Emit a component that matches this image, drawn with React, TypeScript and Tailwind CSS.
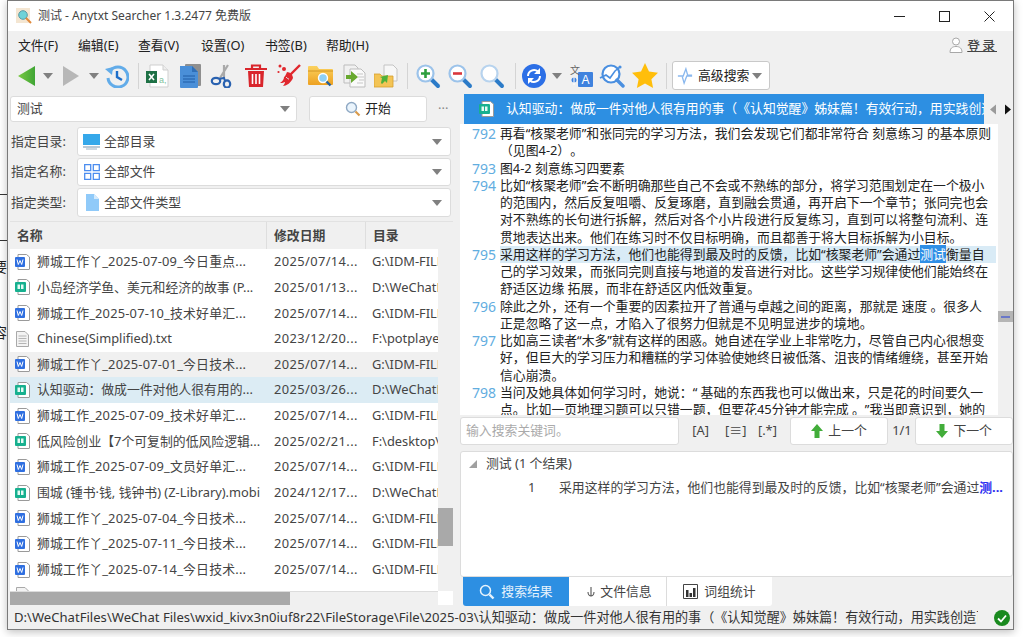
import type { ReactNode } from 'react'

const Caret = ({ className = '' }: { className?: string }) => (
  <svg viewBox="0 0 10 6" className={`h-[6px] w-[10px] shrink-0 ${className}`}>
    <path d="M0 0h10L5 6z" fill="#808080" />
  </svg>
)

function Lens({ mark, ring = '#9cc3ea' }: { mark?: ReactNode; ring?: string }) {
  return (
    <svg viewBox="0 0 26 26" className="h-[26px] w-[26px]">
      <path d="M16 16l7 7" stroke="#2b7bc8" strokeWidth="4" strokeLinecap="round" />
      <circle cx="10.5" cy="10.5" r="8" fill="#fff" stroke={ring} strokeWidth="2.2" />
      {mark}
    </svg>
  )
}

const BackIcon = () => (
  <svg viewBox="0 0 18 20" className="h-[20px] w-[18px]">
    <defs>
      <linearGradient id="bk" x1="0" x2="1">
        <stop offset="0" stopColor="#7ac943" />
        <stop offset="1" stopColor="#3fa535" />
      </linearGradient>
    </defs>
    <path d="M0 10L17 0v20z" fill="url(#bk)" />
  </svg>
)

const ForwardIcon = () => (
  <svg viewBox="0 0 16 20" className="h-[20px] w-[16px]">
    <path d="M16 10L0 0v20z" fill="#b7b7b7" />
  </svg>
)

const HistoryIcon = () => (
  <svg viewBox="0 0 24 24" className="h-[24px] w-[24px]">
    <path d="M5 7a10 10 0 1 1-2 7" fill="none" stroke="#62ace9" strokeWidth="3" />
    <path d="M0 5l8-2-1 8z" fill="#62ace9" />
    <path d="M12 7v6l5 3" fill="none" stroke="#1f6fc9" strokeWidth="2.4" />
  </svg>
)

const ExcelIcon = () => (
  <svg viewBox="0 0 24 24" className="h-[24px] w-[24px]">
    <path d="M5 1h13l5 5v17H5z" fill="#fff" stroke="#cfcfcf" />
    <path d="M18 1v5h5" fill="#eee" stroke="#cfcfcf" />
    <rect x="1" y="7" width="11" height="12" fill="#1e7145" />
    <path d="M4 10l5 6M9 10l-5 6" stroke="#fff" strokeWidth="1.6" />
    <text x="14" y="19" fontSize="9" fill="#7fc29b" fontFamily="Liberation Sans, sans-serif">a,</text>
  </svg>
)

const DocIcon = () => (
  <svg viewBox="0 0 22 24" className="h-[24px] w-[22px]">
    <rect x="6" y="0" width="16" height="22" rx="1" fill="#8f8f8f" />
    <path d="M1 2h12l6 6v15a1 1 0 0 1-1 1H2a1 1 0 0 1-1-1z" fill="#4a8fd8" />
    <path d="M13 2v6h6z" fill="#2f6fb8" />
    <path d="M4 12h12M4 15h12M4 18h12" stroke="#1f5da6" strokeWidth="1" />
  </svg>
)

const ScissorsIcon = () => (
  <svg viewBox="0 0 24 24" className="h-[24px] w-[24px]">
    <path d="M10 14L18 1M14 14L14 1" stroke="#a9a9a9" strokeWidth="2.2" />
    <ellipse cx="6" cy="17" rx="4.2" ry="3.2" fill="none" stroke="#2a62b0" strokeWidth="2.2" />
    <ellipse cx="17" cy="20" rx="3.2" ry="3.6" fill="none" stroke="#2a62b0" strokeWidth="2.2" />
    <path d="M9 15l5-1 1 3" fill="none" stroke="#2a62b0" strokeWidth="2" />
  </svg>
)

const TrashIcon = () => (
  <svg viewBox="0 0 22 24" className="h-[24px] w-[22px]">
    <path d="M7 4V1.5h8V4M0 5h22" fill="none" stroke="#d9262c" strokeWidth="2.2" />
    <path d="M3 7h16l-1 16H4z" fill="#d9262c" />
    <path d="M7.5 10v10M11 10v10M14.5 10v10" stroke="#fff" strokeWidth="1.6" />
  </svg>
)

const BroomIcon = () => (
  <svg viewBox="0 0 24 24" className="h-[24px] w-[24px]">
    <path d="M23 1L13 11" stroke="#e0282e" strokeWidth="2.4" />
    <path d="M10 8c3 0 6 3 6 6-2 5-7 8-10 8 1-1 2-3 2-4-2 1-4 1-5 1 3-2 4-4 4-6 1 0 2-3 3-5z" fill="#e0282e" />
    <path d="M9 13c1 1 2 2 3 2" stroke="#fff" strokeWidth="1" />
    <circle cx="3" cy="2" r="1.5" fill="#e0282e" />
    <circle cx="7" cy="5" r="2" fill="#e0282e" />
    <circle cx="1.5" cy="8" r="1.1" fill="#e0282e" />
  </svg>
)

const FolderSearchIcon = () => (
  <svg viewBox="0 0 26 24" className="h-[24px] w-[26px]">
    <defs>
      <linearGradient id="fo" x1="0" x2="0" y1="0" y2="1">
        <stop offset="0" stopColor="#fbd25f" />
        <stop offset="1" stopColor="#eda122" />
      </linearGradient>
    </defs>
    <path d="M0 3a1 1 0 0 1 1-1h8l2 3h13a1 1 0 0 1 1 1v14a1 1 0 0 1-1 1H1a1 1 0 0 1-1-1z" fill="url(#fo)" />
    <path d="M0 7h25" stroke="#c98a1b" strokeWidth="0.8" />
    <circle cx="15" cy="14" r="4.5" fill="#8fd0f5" stroke="#fff" strokeWidth="1.4" />
    <path d="M18.5 17.5l4 4" stroke="#225f9f" strokeWidth="2.4" />
  </svg>
)

const CopyIcon = () => (
  <svg viewBox="0 0 24 24" className="h-[24px] w-[24px]">
    <path d="M2 1h11l3 3v15H2z" fill="#f1f1f1" stroke="#bdbdbd" />
    <path d="M8 5h11l4 4v14H8z" fill="#fafafa" stroke="#bdbdbd" />
    <path d="M15 10h6M15 19h6M16 13h6M17 16h5" stroke="#c7c7c7" />
    <path d="M4 11h5V7l7 6-7 6v-4H4z" fill="#68a92f" />
  </svg>
)

const FolderArrowIcon = () => (
  <svg viewBox="0 0 24 24" className="h-[24px] w-[24px]">
    <path d="M10 1h9l4 4v12H10z" fill="#f7f7f7" stroke="#c4c4c4" />
    <path d="M0 10h6l2 2h11v11H0z" fill="#f3c455" stroke="#d59e2c" strokeWidth="0.8" />
    <path d="M7 19l1-5-2-1 8-2-1 8-2-2-3 3z" fill="#4fb13b" />
  </svg>
)

const SyncIcon = () => (
  <svg viewBox="0 0 24 24" className="h-[24px] w-[24px]">
    <circle cx="12" cy="12" r="12" fill="#2c6fe6" />
    <path d="M6 12a6 6 0 0 1 10-4.4" fill="none" stroke="#fff" strokeWidth="2" />
    <path d="M18 12a6 6 0 0 1-10 4.4" fill="none" stroke="#fff" strokeWidth="2" />
    <path d="M18 4v6h-6zM6 20v-6h6z" fill="#fff" />
  </svg>
)

const TranslateIcon = () => (
  <svg viewBox="0 0 24 24" className="h-[24px] w-[24px]">
    <rect x="9" y="8" width="15" height="15" rx="1" fill="#3f82de" />
    <text x="16.5" y="20" textAnchor="middle" fontSize="12" fill="#fff" fontFamily="Liberation Sans, sans-serif">A</text>
    <text x="1" y="10" fontSize="10" fill="#666" fontFamily="Noto Sans CJK SC, sans-serif">文</text>
    <circle cx="5" cy="16" r="2.5" fill="#3f82de" />
    <path d="M5 13v8" stroke="#fff" strokeWidth="1" />
  </svg>
)

const ChartLensIcon = () => (
  <svg viewBox="0 0 26 26" className="h-[26px] w-[26px]">
    <circle cx="12" cy="11" r="8.5" fill="#fff" stroke="#4a8fe0" strokeWidth="2.2" />
    <path d="M18 17l6 6" stroke="#4a8fe0" strokeWidth="3.4" strokeLinecap="round" />
    <path d="M1 15l6-3 4 3 5-7 5-4" fill="none" stroke="#4a8fe0" strokeWidth="1.6" />
    <circle cx="21" cy="4" r="1.6" fill="#4a8fe0" />
  </svg>
)

const StarIcon = () => (
  <svg viewBox="0 0 26 25" className="h-[25px] w-[26px]">
    <path d="M13 0l4 8.6 9 1.2-6.6 6.4 1.7 8.8L13 20.6 4.9 25l1.7-8.8L0 9.8l9-1.2z" fill="#ffbe0b" />
  </svg>
)

const AdvIcon = () => (
  <svg viewBox="0 0 18 20" className="h-[18px] w-[16px]">
    <path d="M1 10h6l3-8 2 7h5M17 10h-6l-3 8-2-7" fill="none" stroke="#8ab8ee" strokeWidth="1.5" />
  </svg>
)

const SmallLens = () => (
  <svg viewBox="0 0 16 16" className="h-[16px] w-[16px]">
    <circle cx="6.5" cy="6.5" r="5" fill="#eaf4fc" stroke="#8fa9c4" strokeWidth="1.4" />
    <path d="M10.5 10.5l4 4" stroke="#d99a4a" strokeWidth="2.2" />
  </svg>
)

const MonitorIcon = () => (
  <svg viewBox="0 0 18 16" className="h-[16px] w-[18px]">
    <rect x="0" y="0" width="17" height="11" fill="#35a8ea" />
    <path d="M0 12h17v2H0z" fill="#b9c9d6" />
    <path d="M3 15h11" stroke="#9db2c2" />
  </svg>
)

const GridIcon = () => (
  <svg viewBox="0 0 16 16" className="h-[16px] w-[16px]">
    <path d="M.7.7h6v6h-6zM9.3.7h6v6h-6zM.7 9.3h6v6h-6zM9.3 9.3h6v6h-6z" fill="none" stroke="#4b8df0" strokeWidth="1.3" />
  </svg>
)

const PageIcon = () => (
  <svg viewBox="0 0 13 17" className="h-[17px] w-[13px]">
    <path d="M0 0h8l5 5v12H0z" fill="#90caf9" />
    <path d="M8 0v5h5z" fill="#d4eafc" />
  </svg>
)

function WordIcon() {
  return (
    <svg viewBox="0 0 15 16" className="h-[16px] w-[15px] shrink-0">
      <path d="M3 .5h8.5L14.5 3v12a.5.5 0 0 1-.5.5H3z" fill="#fff" stroke="#9a9a9a" />
      <rect x="0" y="3" width="10" height="10" rx="1" fill="#2f6fe0" />
      <path d="M2 5.5l1.3 5 1.700-4 1.700 4 1.300-5" fill="none" stroke="#fff" strokeWidth="1" />
    </svg>
  )
}

function BookIcon() {
  return (
    <svg viewBox="0 0 15 16" className="h-[16px] w-[15px] shrink-0">
      <path d="M3 .5h8.5L14.5 3v12a.5.5 0 0 1-.5.5H3z" fill="#fff" stroke="#9a9a9a" />
      <rect x="0" y="3" width="11" height="10" rx="1" fill="#17b08f" />
      <path d="M2.5 5.5h2.500v4.500h-2.500zM6 5.500h2.500v4.500h-2.500z" fill="#e6fbf5" />
    </svg>
  )
}

function TextIcon() {
  return (
    <svg viewBox="0 0 13 16" className="mx-px h-[16px] w-[13px] shrink-0">
      <path d="M.5.5h8.500l3.500 3.500v11.500H.5z" fill="#f3f3f3" stroke="#a9a9a9" />
      <path d="M2.5 5h8M2.500 7.500h8M2.500 10h8M2.500 12.500h8" stroke="#b5b5b5" />
    </svg>
  )
}

const ArrowUp = () => (
  <svg viewBox="0 0 12 14" className="h-[14px] w-[12px]">
    <path d="M6 0l6 7H8.5v7h-5V7H0z" fill="#42ad3a" />
  </svg>
)

const ArrowDown = () => (
  <svg viewBox="0 0 12 14" className="h-[14px] w-[12px]">
    <path d="M6 14L0 7h3.5V0h5v7H12z" fill="#42ad3a" />
  </svg>
)

const Sep = ({ }: {}) => <div className="h-[26px] w-px bg-[#d4d4d4]" />

const tools: { w: string; el: ReactNode }[] = [
  { w: 'w-[26px]', el: <BackIcon /> },
  { w: 'w-[16px]', el: <Caret /> },
  { w: 'w-[30px]', el: <ForwardIcon /> },
  { w: 'w-[16px]', el: <Caret /> },
  { w: 'w-[30px]', el: <HistoryIcon /> },
  { w: 'w-[12px]', el: <Sep /> },
  { w: 'w-[26px]', el: <ExcelIcon /> },
  { w: 'w-[4px]', el: null },
  { w: 'w-[32px]', el: <DocIcon /> },
  { w: 'w-[32px]', el: <ScissorsIcon /> },
  { w: 'w-[2px]', el: null },
  { w: 'w-[32px]', el: <TrashIcon /> },
  { w: 'w-[1px]', el: null },
  { w: 'w-[32px]', el: <BroomIcon /> },
  { w: 'w-[32px]', el: <FolderSearchIcon /> },
  { w: 'w-[1px]', el: null },
  { w: 'w-[32px]', el: <CopyIcon /> },
  { w: 'w-[32px]', el: <FolderArrowIcon /> },
  { w: 'w-[10px]', el: <Sep /> },
  { w: 'w-[32px]', el: <Lens mark={<path d="M10.5 6v9M6 10.5h9" stroke="#2e9e3e" strokeWidth="2.6" />} /> },
  { w: 'w-[32px]', el: <Lens mark={<path d="M6 10.5h9" stroke="#d9363c" strokeWidth="2.6" />} /> },
  { w: 'w-[32px]', el: <Lens ring="#b7d3ee" /> },
  { w: 'w-[14px]', el: <Sep /> },
  { w: 'w-[24px]', el: <SyncIcon /> },
  { w: 'w-[22px]', el: <Caret /> },
  { w: 'w-[26px]', el: <TranslateIcon /> },
  { w: 'w-[36px]', el: <ChartLensIcon /> },
  { w: 'w-[30px]', el: <StarIcon /> },
  { w: 'w-[12px]', el: <Sep /> },
]

const menus = ['文件(F)', '编辑(E)', '查看(V)', '设置(O)', '书签(B)', '帮助(H)']
const menuWidths = ['w-[60px]', 'w-[60px]', 'w-[63px]', 'w-[64px]', 'w-[61px]', 'w-[60px]']

const filters = [
  { label: '指定目录:', value: '全部目录', icon: <MonitorIcon />, h: 'h-[29px]' },
  { label: '指定名称:', value: '全部文件', icon: <GridIcon />, h: 'h-[28px]' },
  { label: '指定类型:', value: '全部文件类型', icon: <PageIcon />, h: 'h-[29px]' },
]

const files = [
  { t: 'w', name: '狮城工作丫_2025-07-09_今日重点...', date: '2025/07/14...', dir: 'G:\\IDM-FILES' },
  { t: 'b', name: '小岛经济学鱼、美元和经济的故事 (P...', date: '2025/01/13...', dir: 'D:\\WeChatFiles' },
  { t: 'w', name: '狮城工作_2025-07-10_技术好单汇...', date: '2025/07/14...', dir: 'G:\\IDM-FILES' },
  { t: 'x', name: 'Chinese(Simplified).txt', date: '2023/12/20...', dir: 'F:\\potplayer' },
  { t: 'w', name: '狮城工作丫_2025-07-01_今日技术...', date: '2025/07/14...', dir: 'G:\\IDM-FILES', bg: 'bg-[#f0f0f0]' },
  { t: 'b', name: '认知驱动：做成一件对他人很有用的...', date: '2025/03/26...', dir: 'D:\\WeChatFiles', bg: 'bg-[#dcecf4]' },
  { t: 'w', name: '狮城工作_2025-07-09_技术好单汇...', date: '2025/07/14...', dir: 'G:\\IDM-FILES' },
  { t: 'b', name: '低风险创业【7个可复制的低风险逻辑...', date: '2025/02/21...', dir: 'F:\\desktop\\' },
  { t: 'w', name: '狮城工作_2025-07-09_文员好单汇...', date: '2025/07/14...', dir: 'G:\\IDM-FILES' },
  { t: 'b', name: '围城 (锺书·钱, 钱钟书) (Z-Library).mobi', date: '2024/12/17...', dir: 'D:\\WeChatFiles' },
  { t: 'w', name: '狮城工作丫_2025-07-04_今日技术...', date: '2025/07/14...', dir: 'G:\\IDM-FILES' },
  { t: 'w', name: '狮城工作丫_2025-07-11_今日技术...', date: '2025/07/14...', dir: 'G:\\IDM-FILES' },
  { t: 'w', name: '狮城工作丫_2025-07-14_今日技术...', date: '2025/07/14...', dir: 'G:\\IDM-FILES' },
  { t: 'x', name: '', date: '', dir: '' },
]

type Para = { n: number; lines: ReactNode[] }

const doc: Para[] = [
  { n: 792, lines: ['再看“核聚老师”和张同完的学习方法，我们会发现它们都非常符合 刻意练习 的基本原则', '（见图4-2）。'] },
  { n: 793, lines: ['图4-2 刻意练习四要素'] },
  {
    n: 794,
    lines: [
      '比如“核聚老师”会不断明确那些自己不会或不熟练的部分，将学习范围划定在一个极小',
      '的范围内，然后反复咀嚼、反复琢磨，直到融会贯通，再开启下一个章节；张同完也会',
      '对不熟练的长句进行拆解，然后对各个小片段进行反复练习，直到可以将整句流利、连',
      '贯地表达出来。他们在练习时不仅目标明确，而且都善于将大目标拆解为小目标。',
    ],
  },
  {
    n: 795,
    lines: [
      <div className="bg-[#d9ebf6]">
        采用这样的学习方法，他们也能得到最及时的反馈，比如“核聚老师”会通过
        <span className="bg-[#2f8fe6] text-white">测试</span>衡量自
      </div>,
      '己的学习效果，而张同完则直接与地道的发音进行对比。这些学习规律使他们能始终在',
      '舒适区边缘 拓展，而非在舒适区内低效重复。',
    ],
  },
  { n: 796, lines: ['除此之外，还有一个重要的因素拉开了普通与卓越之间的距离，那就是 速度 。很多人', '正是忽略了这一点，才陷入了很努力但就是不见明显进步的境地。'] },
  {
    n: 797,
    lines: [
      '比如高三读者“木多”就有这样的困惑。她自述在学业上非常吃力，尽管自己内心很想变',
      '好，但巨大的学习压力和糟糕的学习体验使她终日被低落、沮丧的情绪缠绕，甚至开始',
      '信心崩溃。',
    ],
  },
  { n: 798, lines: ['当问及她具体如何学习时，她说：“ 基础的东西我也可以做出来，只是花的时间要久一', '点。比如一页地理习题可以只错一题，但要花45分钟才能完成 。”我当即意识到，她的'] },
]

const box = 'rounded-[3px] border border-[#dcdcdc] bg-white'

export default function App() {
  return (
    <div className="relative h-[637px] w-[1024px] overflow-hidden bg-white font-['Noto_Sans','Noto_Sans_CJK_SC',sans-serif] text-[12.85px] text-[#333] [text-spacing-trim:space-all]">
      {/* bits of whatever sits behind the window */}
      <span className="absolute left-[-7px] top-[256px] text-[14px] text-[#222]">要</span>
      <span className="absolute left-[-7px] top-[322px] text-[14px] text-[#222]">容</span>
      <div className="absolute left-0 top-[194px] h-px w-[7px] bg-[#333]" />
      <div className="absolute left-0 top-[240px] h-px w-[7px] bg-[#333]" />

      <div className="ml-[7px] flex h-[630px] w-[1007px] flex-col border border-[#7a7a7a] bg-[#f0f0f0] shadow-[0_2px_8px_rgba(0,0,0,0.25)]">
        {/* title */}
        <div className="flex h-[30px] shrink-0 items-center bg-white pl-[8px]">
          <svg viewBox="0 0 16 16" className="h-[16px] w-[16px]">
            <rect width="14" height="15" fill="#f4e6d2" />
            <circle cx="7" cy="7" r="4.3" fill="#6fd3d8" stroke="#5a9aa5" />
            <path d="M10 10l5 5" stroke="#e08a3c" strokeWidth="2" />
          </svg>
          <span className="ml-[6px] whitespace-nowrap text-[12px] text-[#444]">测试 - Anytxt Searcher 1.3.2477 免费版</span>
          <div className="ml-auto flex h-full items-center">
            <div className="flex w-[44px] justify-center">
              <div className="h-px w-[11px] bg-[#222]" />
            </div>
            <div className="flex w-[46px] justify-center">
              <div className="h-[11px] w-[11px] border border-[#222]" />
            </div>
            <div className="flex w-[46px] justify-center pr-[2px]">
              <svg viewBox="0 0 11 11" className="h-[11px] w-[11px]">
                <path d="M.5.5l10 10M10.5.5l-10 10" stroke="#222" />
              </svg>
            </div>
          </div>
        </div>

        {/* menu */}
        <div className="flex h-[29px] shrink-0 items-center pl-[10px]">
          {menus.map((m, i) => (
            <span key={m} className={`${menuWidths[i]} whitespace-nowrap text-[#222]`}>
              {m}
            </span>
          ))}
          <div className="ml-auto flex items-center gap-[4px] pr-[16px]">
            <svg viewBox="0 0 14 16" className="h-[16px] w-[14px]">
              <circle cx="7" cy="4.5" r="3.5" fill="#fff" stroke="#a8a8a8" />
              <path d="M1 15.5c0-4 2-6 6-6s6 2 6 6z" fill="#fff" stroke="#a8a8a8" />
            </svg>
            <span className="font-medium tracking-[2px] text-[#444] underline">登录</span>
          </div>
        </div>

        {/* toolbar */}
        <div className="flex h-[31px] shrink-0 items-center pl-[6px]">
          {tools.map((t, i) => (
            <div key={i} className={`flex h-full shrink-0 items-center justify-center ${t.w}`}>
              {t.el}
            </div>
          ))}
          <div className="flex h-[29px] w-[98px] items-center rounded-[3px] border border-[#c9c9c9] bg-white pl-[4px]">
            <AdvIcon />
            <span className="ml-[5px] text-[#222]">高级搜索</span>
            <Caret className="ml-[3px]" />
          </div>
        </div>

        {/* panes */}
        <div className="flex min-h-0 flex-1">
          {/* left */}
          <div className="flex w-[452px] shrink-0 flex-col pl-[2px] pt-[5px]">
            <div className="flex h-[26px] shrink-0 items-center">
              <div className={`flex h-full w-[287px] items-center justify-between px-[6px] ${box}`}>
                <span className="text-[#444]">测试</span>
                <Caret />
              </div>
              <div className={`ml-[12px] flex h-full w-[118px] items-center justify-center gap-[4px] ${box}`}>
                <SmallLens />
                <span className="text-[#222]">开始</span>
              </div>
              <span className="ml-[11px] text-[#888]">···</span>
            </div>
            <div className="mt-[5px] flex flex-col gap-[2px]">
              {filters.map((f) => (
                <div key={f.label} className={`flex items-center ${f.h}`}>
                  <span className="w-[67px] whitespace-nowrap pl-[1px] text-[#444]">{f.label}</span>
                  <div className={`flex h-full w-[374px] items-center pl-[5px] pr-[8px] ${box}`}>
                    <div className="flex w-[18px] justify-center">{f.icon}</div>
                    <span className="ml-[3px] text-[#444]">{f.value}</span>
                    <Caret className="ml-auto" />
                  </div>
                </div>
              ))}
            </div>

            {/* results table */}
            <div className="mt-[4px] flex h-[384px] w-[443px] flex-col border-t border-[#e2e2e2]">
              <div className="flex min-h-0 flex-1">
                <div className="w-[428px] min-w-0 overflow-hidden">
                  <div className="flex h-[27px] items-center font-semibold text-[#444]">
                    <div className="flex h-full w-[257px] items-center border-r border-[#dedede] pl-[7px]">名称</div>
                    <div className="flex h-full w-[99px] items-center border-r border-[#dedede] pl-[7px]">修改日期</div>
                    <div className="pl-[7px]">目录</div>
                  </div>
                  <div className="h-[343px] overflow-hidden bg-white">
                    {files.map((f, i) => (
                      <div key={i} className={`flex h-[25.67px] items-center whitespace-nowrap text-[#444] ${f.bg ?? ''}`}>
                        <div className="flex w-[257px] shrink-0 items-center overflow-hidden pl-[5px]">
                          {f.t === 'w' ? <WordIcon /> : f.t === 'b' ? <BookIcon /> : <TextIcon />}
                          <span className={`ml-[7px] ${f.t === 'w' ? 'tracking-[0.2px]' : ''}`}>{f.name}</span>
                        </div>
                        <div className="w-[99px] shrink-0 pl-[7px] tracking-[0.4px]">{f.date}</div>
                        <div className="w-[72px] shrink-0 overflow-hidden pl-[6px]">{f.dir}</div>
                      </div>
                    ))}
                  </div>
                </div>
                <div className="w-[15px] shrink-0 bg-[#f0f0f0]">
                  <div className="mt-[286px] h-[38px] bg-[#a9a9a9]" />
                </div>
              </div>
              <div className="flex h-[14px] shrink-0">
                <div className="h-full w-[428px] border-t border-[#dcdcdc] bg-[#f0f0f0]">
                  <div className="h-full w-[280px] bg-[#a9a9a9]" />
                </div>
                <div className="w-[15px] bg-white" />
              </div>
            </div>
          </div>

          {/* right */}
          <div className="flex min-w-0 flex-1 flex-col pt-[3px]">
            <div className="flex h-[30px] shrink-0 items-center">
              <div className="ml-[4px] flex h-full w-[520px] items-center overflow-hidden whitespace-nowrap bg-[#2d8fe2] pl-[15px] text-white">
                <BookIcon />
                <span className="ml-[12px]">认知驱动：做成一件对他人很有用的事（《认知觉醒》姊妹篇！有效行动，用实践创造可</span>
              </div>
              <svg viewBox="0 0 6 10" className="ml-[6px] h-[11px] w-[6px]">
                <path d="M6 0v10L0 5z" fill="#9a9a9a" />
              </svg>
              <svg viewBox="0 0 6 10" className="ml-[9px] h-[11px] w-[6px]">
                <path d="M0 0v10l6-5z" fill="#111" />
              </svg>
            </div>

            <div className="flex h-[291px] shrink-0">
              <div className="w-[538px] overflow-hidden whitespace-nowrap bg-white pt-[1px] text-[#222]">
                {doc.map((p) => (
                  <div key={p.n} className="flex">
                    <span className="w-[40px] shrink-0 pl-[12px] text-[14px] leading-[17.25px] text-[#62addf]">{p.n}</span>
                    <div className="min-w-0 flex-1 pr-[2px]">
                      {p.lines.map((l, i) => (
                        <div key={i} className="h-[17.25px] leading-[17.25px]">
                          {l}
                        </div>
                      ))}
                    </div>
                  </div>
                ))}
              </div>
              <div className="flex-1 bg-[#f0f0f0]">
                <div className="mt-[187px] flex h-[11px] items-center justify-center bg-[#b5b5b5]">
                  <div className="h-[2px] w-[9px] bg-[#6a78c8]" />
                </div>
              </div>
            </div>

            {/* find bar */}
            <div className="mt-[2px] flex h-[28px] shrink-0 items-center">
              <div className={`flex h-full w-[220px] items-center px-[5px] text-[#aaa] ${box}`}>输入搜索关键词。</div>
              <span className="ml-[13px] w-[33px] text-[#444]">[A]</span>
              <span className="w-[33px] text-[#444]">[≡]</span>
              <span className="w-[32px] text-[#444]">[.*]</span>
              <div className={`flex h-full w-[99px] items-center justify-center gap-[5px] ${box}`}>
                <ArrowUp />
                <span className="text-[#444]">上一个</span>
              </div>
              <span className="w-[27px] text-center text-[#444]">1/1</span>
              <div className={`flex h-full w-[98px] items-center justify-center gap-[5px] ${box}`}>
                <ArrowDown />
                <span className="text-[#444]">下一个</span>
              </div>
            </div>

            {/* hit list */}
            <div className={`mt-[6px] h-[126px] shrink-0 overflow-hidden ${box}`}>
              <div className="flex h-[24px] items-center pl-[8px] text-[#444]">
                <svg viewBox="0 0 8 8" className="h-[8px] w-[8px]">
                  <path d="M8 0v8H0z" fill="#a0a0a0" />
                </svg>
                <span className="ml-[9px]">测试 (1 个结果)</span>
              </div>
              <div className="flex h-[24px] items-center whitespace-nowrap text-[#444]">
                <span className="ml-[67px] w-[31px]">1</span>
                <span>
                  采用这样的学习方法，他们也能得到最及时的反馈，比如“核聚老师”会通过
                  <span className="font-bold text-[#2b2bf0]">测...</span>
                </span>
              </div>
            </div>

            {/* bottom tabs */}
            <div className="flex h-[29px] shrink-0 pl-[3px]">
              <div className="flex w-[106px] items-center justify-center gap-[6px] rounded-bl-[3px] bg-[#2d8fe2] text-[#e8f3fc]">
                <svg viewBox="0 0 16 16" className="h-[16px] w-[16px]">
                  <circle cx="6.5" cy="6.5" r="5" fill="none" stroke="#e8f3fc" strokeWidth="1.5" />
                  <path d="M10.5 10.5l4 4" stroke="#e8f3fc" strokeWidth="2.4" />
                </svg>
                搜索结果
              </div>
              <div className="flex w-[98px] items-center justify-center gap-[4px] border-r border-[#dcdcdc] bg-white pl-[3px] text-[#444]">
                <svg viewBox="0 0 10 12" className="h-[12px] w-[10px]">
                  <path d="M5 1v9M2 6c0 3 2 4 3 4s3-1 3-4" fill="none" stroke="#555" strokeWidth="1.1" />
                </svg>
                文件信息
              </div>
              <div className="flex w-[105px] items-center justify-center gap-[6px] rounded-br-[3px] bg-white text-[#444]">
                <svg viewBox="0 0 15 15" className="h-[15px] w-[15px]">
                  <path d="M.5.5h14v14H.5z" fill="none" stroke="#444" />
                  <path d="M3 6h2.5v7H3zM6.500 9H9v4H6.500zM10 4h2.500v9H10z" fill="#333" />
                </svg>
                词组统计
              </div>
            </div>
          </div>
        </div>

        {/* status */}
        <div className="flex h-[23px] shrink-0 items-center pl-[6px] pr-[2px] text-[13.1px] text-[#333]">
          <div className="w-[964px] overflow-hidden whitespace-nowrap">
            D:\WeChatFiles\WeChat Files\wxid_kivx3n0iuf8r22\FileStorage\File\2025-03\认知驱动：做成一件对他人很有用的事（《认知觉醒》姊妹篇！有效行动，用实践创造可
          </div>
          <svg viewBox="0 0 16 16" className="ml-auto mr-[1px] h-[16px] w-[16px]">
            <circle cx="8" cy="8" r="8" fill="#1a8a1f" />
            <path d="M4 8.500l3 3 5-6" fill="none" stroke="#fff" strokeWidth="1.8" />
          </svg>
        </div>
      </div>
    </div>
  )
}
